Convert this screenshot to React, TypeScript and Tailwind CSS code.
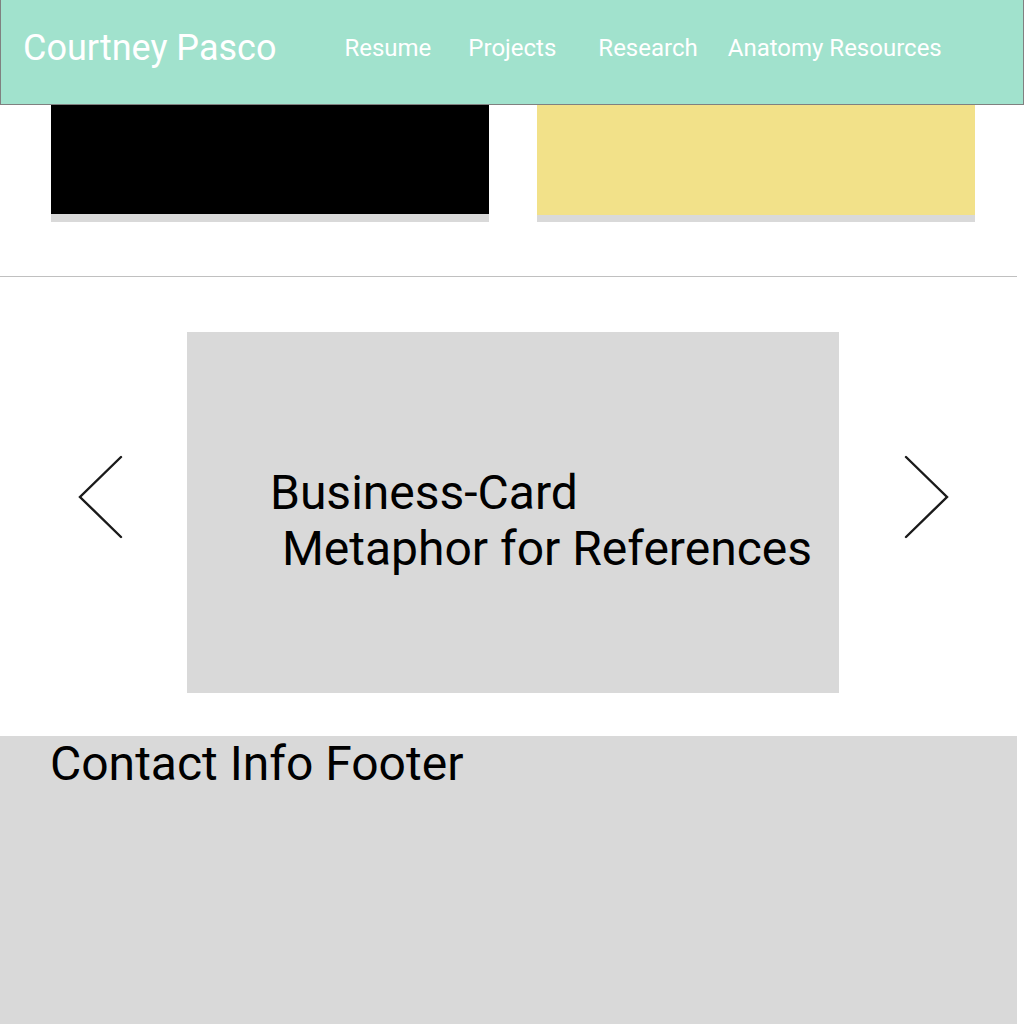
import React from 'react';

const navLinks = [
  { label: 'Resume', ml: 'ml-[68px]' },
  { label: 'Projects', ml: 'ml-[37px]' },
  { label: 'Research', ml: 'ml-[42px]' },
  { label: 'Anatomy Resources', ml: 'ml-[30px]' },
];

const Chevron: React.FC<{ dir: 'left' | 'right' }> = ({ dir }) => (
  <svg width="50" height="84" viewBox="0 0 50 84" fill="none" className="mt-[123px] shrink-0">
    <path
      d={dir === 'left' ? 'M46 2 L5 42 L46 82' : 'M6 2 L47 42 L6 82'}
      stroke="#1a1a1a"
      strokeWidth="2.4"
      strokeLinecap="round"
      strokeLinejoin="miter"
    />
  </svg>
);

const App: React.FC = () => {
  return (
    <div className="w-[1024px] min-h-[1024px] bg-white overflow-hidden font-['Roboto','Liberation_Sans',sans-serif]">
      {/* header */}
      <header className="h-[105px] bg-[#a1e2cd] border-l border-r border-b border-[#808080] flex items-center pl-[22px] pb-[8px] text-white">
        <h1 className="text-[36px] leading-none">Courtney Pasco</h1>
        <nav className="flex items-center">
          {navLinks.map((link) => (
            <a key={link.label} className={`${link.ml} text-[24px] leading-none`}>
              {link.label}
            </a>
          ))}
        </nav>
      </header>

      {/* feature tiles */}
      <div className="flex pl-[51px] gap-[48px] w-[1017px]">
        <div className="w-[438px]">
          <div className="h-[109px] bg-black" />
          <div className="h-[8px] bg-[#d9d9d9]" />
        </div>
        <div className="w-[438px]">
          <div className="h-[110px] bg-[#f2e189]" />
          <div className="h-[7px] bg-[#d9d9d9]" />
        </div>
      </div>

      <div className="mt-[54px] w-[1017px] h-px bg-[#c0c0c0]" />

      {/* carousel */}
      <section className="flex items-start pt-[55px] pl-[75px] w-[1017px] h-[459px]">
        <Chevron dir="left" />
        <div className="ml-[62px] w-[652px] h-[361px] bg-[#d9d9d9] pl-[83px] pt-[133px] shrink-0">
          <p className="text-[48px] leading-[56px] text-black whitespace-pre">
            {'Business-Card\n Metaphor for References'}
          </p>
        </div>
        <div className="ml-[61px]">
          <Chevron dir="right" />
        </div>
      </section>

      {/* footer */}
      <footer className="w-[1017px] h-[288px] bg-[#d9d9d9] pl-[50px]">
        <h2 className="text-[48px] leading-[56px] text-black">Contact Info Footer</h2>
      </footer>
    </div>
  );
};

export default App;
